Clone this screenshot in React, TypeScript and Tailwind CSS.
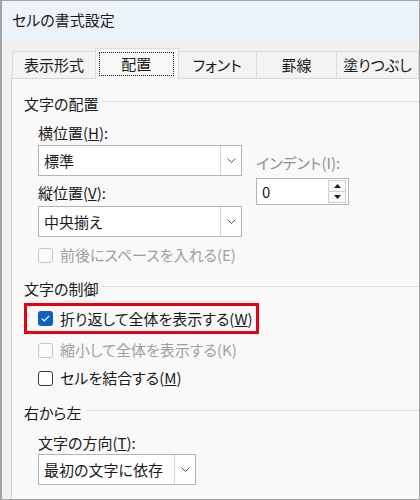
import React from 'react'

const font = "[font-family:'Noto_Sans_CJK_JP',sans-serif] [font-feature-settings:'palt']"

function Chevron() {
  return (
    <svg width="9" height="5" viewBox="0 0 9 5">
      <polyline points="0.5,0.5 4.5,4.5 8.5,0.5" fill="none" stroke="#555" strokeWidth="1" />
    </svg>
  )
}

function Select({ value, width }: { value: string; width: string }) {
  return (
    <div className={`${width} h-[31px] flex bg-white border border-[#b4b4b4]`}>
      <div className="flex-1 flex items-center pl-[5px] text-[15px] leading-[20px] text-[#1a1a1a]">{value}</div>
      <div className="w-[21px] flex items-center justify-center border-l border-[#d4d4d4]">
        <Chevron />
      </div>
    </div>
  )
}

function Check({ checked, disabled }: { checked?: boolean; disabled?: boolean }) {
  if (checked) {
    return (
      <div className="w-[15px] h-[15px] rounded-[3px] bg-[#0f5fc5] flex items-center justify-center">
        <svg width="9" height="7" viewBox="0 0 9 7">
          <polyline points="0.8,3.6 3.2,5.9 8.2,0.9" fill="none" stroke="#fff" strokeWidth="1.3" />
        </svg>
      </div>
    )
  }
  return (
    <div
      className={`w-[15px] h-[15px] rounded-[3px] border ${
        disabled ? 'border-[#c6c6c6] bg-[#fbfbfb]' : 'border-[#3a3a3a] bg-[#fdfdfd]'
      }`}
    />
  )
}

function CheckRow({
  checked,
  disabled,
  children,
}: {
  checked?: boolean
  disabled?: boolean
  children: React.ReactNode
}) {
  return (
    <div className="h-[20px] flex items-center gap-[7px]">
      <Check checked={checked} disabled={disabled} />
      <span className={`text-[15px] leading-[20px] ${disabled ? 'text-[#a0a0a0]' : 'text-[#1a1a1a]'}`}>
        {children}
      </span>
    </div>
  )
}

function Section({ title }: { title: string }) {
  return (
    <div className="h-[20px] flex gap-[4px] pr-0">
      <span className="text-[15px] leading-[20px] text-[#1a1a1a]">{title}</span>
      <div className="flex-1 h-px mt-[7px] bg-[#dcdcdc]" />
    </div>
  )
}

function Label({ children, disabled }: { children: React.ReactNode; disabled?: boolean }) {
  return (
    <div className={`h-[20px] text-[15px] leading-[20px] ${disabled ? 'text-[#8f8f8f]' : 'text-[#1a1a1a]'}`}>
      {children}
    </div>
  )
}

function Tab({ label, className }: { label: string; className: string }) {
  return (
    <div
      className={`h-[27px] flex items-center justify-center bg-[#f3f3f3] border-t border-[#dcdcdc] text-[15px] leading-[20px] text-[#1a1a1a] ${className}`}>
      {label}
    </div>
  )
}

function Triangle({ up }: { up?: boolean }) {
  return (
    <svg width="7" height="4" viewBox="0 0 7 4">
      <polygon points={up ? '3.5,0 7,4 0,4' : '0,0 7,0 3.5,4'} fill="#1a1a1a" />
    </svg>
  )
}

export default function App() {
  return (
    <div
      className={`w-[420px] h-[500px] overflow-hidden flex flex-col bg-[#f0f0f0] border border-[#a3a3a3] border-l-2 ${font}`}>
      <div className="h-[37px] shrink-0 bg-[#edf3fb] flex items-center pl-[10px] text-[15px] leading-[20px] text-[#1a1a1a]">
        セルの書式設定
      </div>

      <div className="mt-[10px] ml-[10px] h-[30px] flex items-end shrink-0 relative z-10">
        <Tab label="表示形式" className="w-[84px] border-l" />
        <div className="w-[84px] h-[31px] -mb-px bg-[#f9f9f9] border-l border-t border-r border-[#dcdcdc] pt-[3px] pl-[3px] pr-[4px] pb-[3px] flex">
          <div className="flex-1 border border-dotted border-[#1a1a1a] flex items-center justify-center text-[15px] leading-[20px] text-[#1a1a1a]">
            配置
          </div>
        </div>
        <Tab label="フォント" className="w-[79px] border-r" />
        <Tab label="罫線" className="w-[81px] border-r" />
        <Tab label="塗りつぶし" className="w-[82px] shrink-0 border-r" />
      </div>

      <div className="flex-1 ml-[9px] bg-[#f9f9f9] border-t border-l border-[#d8d8d8] pl-[12px] pt-[15px] flex flex-col">
        <Section title="文字の配置" />

        <div className="flex ml-[14px] mt-[9px]">
          <div className="flex flex-col w-[204px]">
            <Label>
              横位置(<u>H</u>):
            </Label>
            <div className="mt-[2px]">
              <Select value="標準" width="w-[204px]" />
            </div>
            <div className="mt-[7px]">
              <Label>
                縦位置(<u>V</u>):
              </Label>
            </div>
            <div className="mt-[3px]">
              <Select value="中央揃え" width="w-[204px]" />
            </div>
          </div>

          <div className="flex flex-col ml-[14px] mt-[30px]">
            <Label disabled>インデント(I):</Label>
            <div className="mt-[5px] w-[93px] h-[27px] bg-white border border-[#b4b4b4] flex">
              <div className="flex-1 flex items-center pl-[5px] text-[15px] leading-[20px] text-[#1a1a1a]">0</div>
              <div className="w-[18px] my-[1px] mr-[2px] flex flex-col">
                <div className="flex-1 flex items-center justify-center border border-[#cfcfcf] bg-[#fafafa]">
                  <Triangle up />
                </div>
                <div className="flex-1 flex items-center justify-center border border-t-0 border-[#cfcfcf] bg-[#fafafa]">
                  <Triangle />
                </div>
              </div>
            </div>
          </div>
        </div>

        <div className="ml-[14px] mt-[8px]">
          <CheckRow disabled>前後にスペースを入れる(E)</CheckRow>
        </div>

        <div className="mt-[14px]">
          <Section title="文字の制御" />
        </div>

        <div className="mt-[4px] w-[235px] h-[31px] border-[3px] border-[#e60012] pl-[11px] flex items-center">
          <CheckRow checked>
            折り返して全体を表示する(<u>W</u>)
          </CheckRow>
        </div>

        <div className="ml-[14px] mt-[6px]">
          <CheckRow disabled>縮小して全体を表示する(K)</CheckRow>
        </div>
        <div className="ml-[14px] mt-[8px]">
          <CheckRow>
            セルを結合する(<u>M</u>)
          </CheckRow>
        </div>

        <div className="mt-[15px]">
          <Section title="右から左" />
        </div>

        <div className="ml-[14px] mt-[10px]">
          <Label>
            文字の方向(<u>T</u>):
          </Label>
          <div className="mt-[1px]">
            <Select value="最初の文字に依存" width="w-[158px]" />
          </div>
        </div>
      </div>
    </div>
  )
}
